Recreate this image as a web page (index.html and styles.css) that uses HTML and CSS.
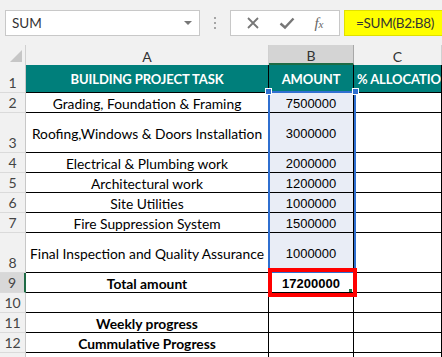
FILE: index.html
```html
<!DOCTYPE html>
<html>
<head>
<meta charset="utf-8">
<link rel="stylesheet" href="styles.css">
</head>
<body>
<div class="app">
  <div class="fbar">
    <div class="namebox"><span class="nb-text">SUM</span><span class="nb-arrow"></span></div>
    <div class="dots"><i></i><i></i><i></i></div>
    <div class="btns">
      <svg class="ico" width="14" height="14" viewBox="0 0 14 14"><path d="M2 2 L12 12 M12 2 L2 12" stroke="#777" stroke-width="1.8" fill="none"/></svg>
      <svg class="ico" width="16" height="14" viewBox="0 0 16 14"><path d="M1.5 7.5 L6 11.5 L14.5 2.5" stroke="#777" stroke-width="2.4" fill="none"/></svg>
      <span class="fx"><i>f</i><span>x</span></span>
    </div>
    <div class="formula">=SUM(B2:B8)</div>
  </div>
  <div class="sheet">
    <div class="grid">
      <div class="corner"><span class="tri"></span></div>
      <div class="ch">A</div>
      <div class="ch ch-sel">B</div>
      <div class="ch">C</div>

      <div class="rh">1</div>
      <div class="c hd">BUILDING PROJECT TASK</div>
      <div class="c hd">AMOUNT</div>
      <div class="c hd left">% ALLOCATION</div>

      <div class="rh">2</div>
      <div class="c">Grading, Foundation &amp; Framing</div>
      <div class="c sel num">7500000</div>
      <div class="c"></div>

      <div class="rh">3</div>
      <div class="c">Roofing,Windows &amp; Doors Installation</div>
      <div class="c sel num">3000000</div>
      <div class="c"></div>

      <div class="rh">4</div>
      <div class="c">Electrical &amp; Plumbing work</div>
      <div class="c sel num">2000000</div>
      <div class="c"></div>

      <div class="rh">5</div>
      <div class="c">Architectural work</div>
      <div class="c sel num">1200000</div>
      <div class="c"></div>

      <div class="rh">6</div>
      <div class="c">Site Utilities</div>
      <div class="c sel num">1000000</div>
      <div class="c"></div>

      <div class="rh">7</div>
      <div class="c">Fire Suppression System</div>
      <div class="c sel num">1500000</div>
      <div class="c"></div>

      <div class="rh">8</div>
      <div class="c">Final Inspection and Quality Assurance</div>
      <div class="c sel num">1000000</div>
      <div class="c"></div>

      <div class="rh rh-sel">9</div>
      <div class="c b">Total amount</div>
      <div class="c b num">17200000</div>
      <div class="c"></div>

      <div class="rh">10</div>
      <div class="c"></div>
      <div class="c"></div>
      <div class="c"></div>

      <div class="rh">11</div>
      <div class="c b">Weekly progress</div>
      <div class="c"></div>
      <div class="c"></div>

      <div class="rh">12</div>
      <div class="c b">Cummulative Progress</div>
      <div class="c"></div>
      <div class="c"></div>

      <div class="rh"></div>
      <div class="c"></div>
      <div class="c"></div>
      <div class="c"></div>
    </div>
    <div class="selection"><span class="h h-l"></span><span class="h h-r"></span></div>
    <div class="redbox"><span class="fill"></span></div>
  </div>
</div>
</body>
</html>
```

FILE: styles.css
```css
* { box-sizing: border-box; }
html, body { margin: 0; padding: 0; }
body {
  width: 442px;
  height: 357px;
  overflow: hidden;
  background: #fff;
  font-family: "Lato", "Liberation Sans", sans-serif;
}
.app { width: 442px; height: 357px; overflow: hidden; }

.fbar {
  height: 45px;
  background: #f1f1f1;
  display: flex;
  align-items: flex-start;
  padding-top: 10px;
  padding-left: 5px;
}
.namebox {
  width: 195px;
  height: 26px;
  background: #fff;
  border: 1px solid #c8c8c8;
  display: flex;
  align-items: center;
  justify-content: space-between;
  padding: 0 7px 0 6px;
}
.nb-text { font-size: 13.5px; color: #333; }
.nb-arrow {
  width: 0; height: 0;
  border-left: 4px solid transparent;
  border-right: 4px solid transparent;
  border-top: 4px solid #777;
}
.dots {
  width: 30px;
  height: 26px;
  display: flex;
  flex-direction: column;
  align-items: center;
  justify-content: center;
  gap: 3px;
}
.dots i { width: 2px; height: 2px; background: #a5a5a5; display: block; }
.btns {
  width: 110px;
  height: 26px;
  background: #fff;
  border: 1px solid #c8c8c8;
  display: flex;
  align-items: center;
  justify-content: space-around;
  padding: 0 6px;
}
.fx { font-family: "Liberation Serif", serif; color: #666; font-size: 15px; font-style: italic; }
.fx span { font-size: 11px; }
.formula {
  margin-left: 4px;
  flex: 1;
  height: 26px;
  background: #ffff00;
  border: 1px solid #e0e000;
  border-right: none;
  font-size: 13.5px;
  letter-spacing: -0.3px;
  color: #333;
  padding-left: 11px;
  line-height: 24px;
}

.sheet { position: relative; }
.grid {
  display: grid;
  grid-template-columns: 26px 243px 85px 88px;
  grid-template-rows: 20px 28px 20px 40px 20px 20px 20px 20px 40px 20px 20px 20px 20px 20px;
}
.corner {
  background: #f1f1f1;
  border-right: 1px solid #d0d0d0;
  position: relative;
}
.tri {
  position: absolute;
  right: 3px; bottom: 3px;
  width: 0; height: 0;
  border-left: 12px solid transparent;
  border-bottom: 12px solid #c6c6c6;
}
.ch {
  background: #f1f1f1;
  border-right: 1px solid #d0d0d0;
  font-size: 14px;
  color: #333;
  display: flex;
  align-items: center;
  justify-content: center;
  padding-top: 2px;
}
.ch-sel { background: #d4d4d4; border-bottom: 2px solid #1e6b45; border-right-color: #a8a8a8; }
.rh {
  background: #f1f1f1;
  border-right: 1px solid #c8c8c8;
  border-bottom: 1px solid #dadada;
  font-size: 14px;
  color: #444;
  display: flex;
  align-items: flex-end;
  justify-content: center;
  padding-bottom: 1px;
}
.rh-sel { background: #d8d8d8; border-right: 2px solid #1e6b45; }
.c {
  border-right: 1px solid #000;
  border-bottom: 1px solid #000;
  font-size: 13.8px;
  color: #000;
  display: flex;
  align-items: center;
  justify-content: center;
  white-space: nowrap;
  overflow: hidden;
  padding-top: 1px;
}
.num {
  font-family: "Liberation Sans", Arial, sans-serif;
  font-size: 13px;
}
.hd {
  background: #007f7b;
  color: #fff;
  font-weight: bold;
  font-size: 13px;
  letter-spacing: -0.1px;
}
.left { justify-content: flex-start; padding-left: 3px; }
.sel { background: #e9edf6; }
.b { font-weight: bold; }

.selection {
  position: absolute;
  left: 268px;
  top: 46px;
  width: 88px;
  height: 182px;
  border: 2px solid #2f6fd0;
}
.h {
  position: absolute;
  top: -5px;
  width: 7px; height: 7px;
  background: #2f6fd0;
  border: 1px solid #fff;
}
.h-l { left: -5px; }
.h-r { right: -5px; }
.redbox {
  position: absolute;
  left: 268px;
  top: 223px;
  width: 89px;
  height: 29px;
  border: 4px solid #ff0000;
}
.fill {
  position: absolute;
  right: 1px; bottom: 1px;
  width: 3px; height: 3px;
  background: #1e7145;
}
```
